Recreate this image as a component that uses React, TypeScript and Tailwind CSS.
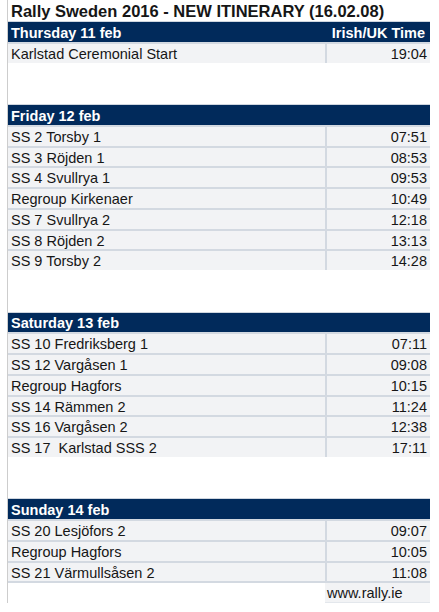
import React from "react";

type Day = {
  title: string;
  showTimeLabel?: boolean;
  stages: [string, string][];
};

const DAYS: Day[] = [
  {
    title: "Thursday 11 feb",
    showTimeLabel: true,
    stages: [["Karlstad Ceremonial Start", "19:04"]],
  },
  {
    title: "Friday 12 feb",
    stages: [
      ["SS 2 Torsby 1", "07:51"],
      ["SS 3 Röjden 1", "08:53"],
      ["SS 4 Svullrya 1", "09:53"],
      ["Regroup Kirkenaer", "10:49"],
      ["SS 7 Svullrya 2", "12:18"],
      ["SS 8 Röjden 2", "13:13"],
      ["SS 9 Torsby 2", "14:28"],
    ],
  },
  {
    title: "Saturday 13 feb",
    stages: [
      ["SS 10 Fredriksberg 1", "07:11"],
      ["SS 12 Vargåsen 1", "09:08"],
      ["Regroup Hagfors", "10:15"],
      ["SS 14 Rämmen 2", "11:24"],
      ["SS 16 Vargåsen 2", "12:38"],
      ["SS 17  Karlstad SSS 2", "17:11"],
    ],
  },
  {
    title: "Sunday 14 feb",
    stages: [
      ["SS 20 Lesjöfors 2", "09:07"],
      ["Regroup Hagfors", "10:05"],
      ["SS 21 Värmullsåsen 2", "11:08"],
    ],
  },
];

function HeaderRow({ day }: { day: Day }) {
  return (
    <div className="flex h-[20.75px] items-center justify-between border-t border-[#cfd6df] bg-[#012a5b] px-[3px] pt-[3px] text-[14.5px] font-bold text-white">
      <span>{day.title}</span>
      {day.showTimeLabel && <span className="pr-[2px]">Irish/UK Time</span>}
    </div>
  );
}

function StageRow({ name, time }: { name: string; time: string }) {
  return (
    <div className="flex h-[20.75px] border-t-2 border-[#d3d9e1] bg-[#f2f3f5] text-[14.5px] text-[#161616]">
      <div className="flex w-[317px] items-center whitespace-pre pl-[3px] pt-[3px]">{name}</div>
      <div className="flex flex-1 items-center justify-end border-l-2 border-[#d3d9e1] pr-[3px] pt-[3px]">
        {time}
      </div>
    </div>
  );
}

export default function App() {
  return (
    <div className="min-h-screen bg-white" style={{ fontFamily: '"Liberation Sans", Arial, sans-serif' }}>
      <div className="ml-[7px] w-[423px] border-l border-[#cdcdcd]">
        {/* Title */}
        <div className="flex h-[21px] items-center pl-[3px] pt-[2px] text-[16.5px] font-bold text-[#161616]">
          Rally Sweden 2016 - NEW ITINERARY (16.02.08)
        </div>

        {DAYS.map((day, i) => (
          <div key={day.title}>
            <HeaderRow day={day} />
            {day.stages.map(([name, time]) => (
              <StageRow key={name + time} name={name} time={time} />
            ))}
            {i < DAYS.length - 1 && <div className="h-[41.5px]" />}
          </div>
        ))}

        {/* Footer link */}
        <div className="flex h-[22px] border-t-2 border-[#d3d9e1]">
          <div className="w-[317px] bg-white" />
          <div className="flex flex-1 items-center border-b border-[#e3e7ec] bg-[#f2f3f5] pl-[2px] pt-[2px] text-[14.5px] text-[#161616]">
            www.rally.ie
          </div>
        </div>
      </div>
    </div>
  );
}
